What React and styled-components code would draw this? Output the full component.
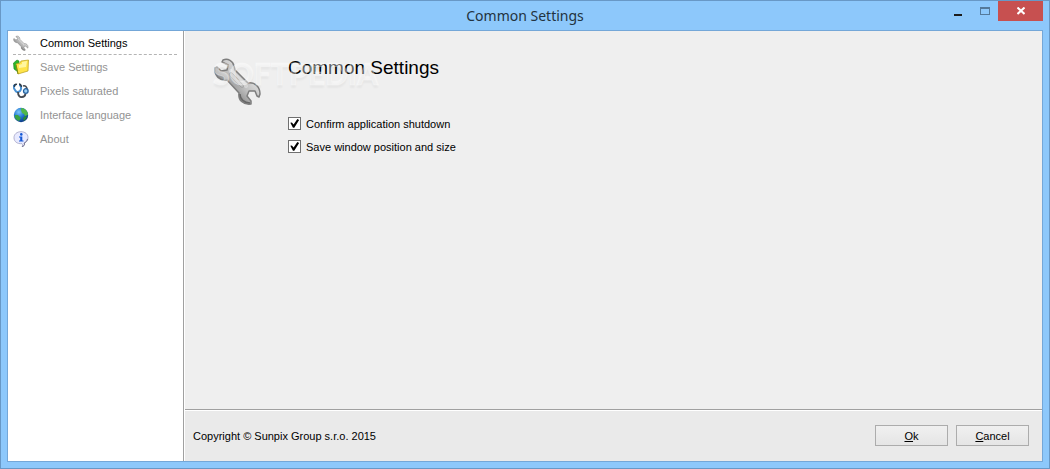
import React, { useState } from 'react';
import styled, { createGlobalStyle } from 'styled-components';

const GlobalStyle = createGlobalStyle`
  * {
    box-sizing: border-box;
  }

  body {
    margin: 0;
    color: #000;
    font-family: 'Liberation Sans', Arial, sans-serif;
    font-size: 11px;
    line-height: 16px;
  }
`;

const Window = styled.div`
  display: flex;
  flex-direction: column;
  min-height: 100vh;
  padding: 0 6px 6px;
  border: 1px solid #6898c6;
  background: #8dc8fb;
`;

const TitleBar = styled.header`
  display: grid;
  grid-template-columns: 1fr auto 1fr;
  height: 29px;
`;

const WindowTitle = styled.div`
  grid-column: 2;
  color: #233340;
  font-family: 'Noto Sans', 'Open Sans', sans-serif;
  font-size: 14px;
  line-height: 29px;
`;

const WindowButtons = styled.div`
  display: flex;
  justify-content: flex-end;
`;

const WindowButton = styled.button`
  width: ${(props) => (props.$close ? 45 : 27)}px;
  height: 20px;
  padding: 0;
  border: 0;
  background: ${(props) => (props.$close ? '#c75050' : 'transparent')};

  svg {
    display: block;
    margin: auto;
  }
`;

const Client = styled.div`
  display: flex;
  flex: 1;
  border: 1px solid #74a7d8;
  background: #fff;
`;

const Sidebar = styled.nav`
  width: 176px;
  flex-shrink: 0;
  border-right: 1px solid #a0a0a0;
`;

const NavItem = styled.a`
  display: flex;
  align-items: center;
  gap: 11px;
  height: 24px;
  margin-right: 6px;
  margin-left: 5px;
  border-bottom: 1px dashed ${(props) => (props.$active ? '#b4b4b4' : 'transparent')};
  color: ${(props) => (props.$active ? '#000' : '#939393')};
  text-decoration: none;

  svg {
    width: 16px;
    height: 16px;
  }
`;

const Content = styled.div`
  display: flex;
  flex: 1;
  flex-direction: column;
  margin-left: 1px;
`;

const Page = styled.main`
  position: relative;
  display: flex;
  flex: 1;
  gap: 25px;
  padding: 25px 28px;
  background: #efefef;

  > svg {
    width: 50px;
    height: 50px;
    flex-shrink: 0;
  }
`;

const Watermark = styled.div`
  position: absolute;
  top: 22px;
  left: 28px;
  color: rgba(255, 255, 255, 0.4);
  font-family: Lato, sans-serif;
  font-size: 30px;
  font-weight: 900;
  line-height: 40px;
  text-shadow: 0 3px 2px rgba(0, 0, 0, 0.04);
  -webkit-text-stroke: 1px rgba(255, 255, 255, 0.3);
  pointer-events: none;
`;

const Heading = styled.h1`
  margin: 0 0 32px;
  font-size: 19px;
  font-weight: normal;
  line-height: 24px;
`;

const Option = styled.label`
  display: flex;
  align-items: center;
  gap: 5px;
  height: 23px;
`;

const Checkbox = styled.input`
  display: block;
  width: 13px;
  height: 13px;
  margin: 0;
  border: 1px solid #707070;
  background: #fff;
  appearance: none;

  &:checked::before {
    display: block;
    width: 11px;
    height: 11px;
    background: #000;
    clip-path: polygon(12% 44%, 26% 40%, 42% 60%, 76% 10%, 92% 18%, 48% 88%, 36% 88%);
    content: '';
  }
`;

const Footer = styled.footer`
  display: flex;
  align-items: center;
  height: 52px;
  padding: 0 13px 0 8px;
  border-top: 1px solid #a0a0a0;
  background: #eaeaea;
  box-shadow: inset 0 1px #fff;
`;

const Copyright = styled.div`
  flex: 1;
`;

const Buttons = styled.div`
  display: flex;
  gap: 8px;
`;

const Button = styled.button`
  width: 73px;
  height: 21px;
  padding: 0;
  border: 1px solid #acacac;
  background: linear-gradient(#f0f0f0, #e5e5e5);
  color: #000;
  font: inherit;
`;

function WrenchIcon() {
  return (
    <svg viewBox='0 0 50 50'>
      <defs>
        <linearGradient id='steel' x1='0' y1='1' x2='1' y2='0'>
          <stop offset='0.3' stopColor='#8c8c8c' />
          <stop offset='0.5' stopColor='#bebebe' />
          <stop offset='0.7' stopColor='#dedede' />
        </linearGradient>
      </defs>
      <path
        d='M10 4 C15 2 20 5 21 10 L22 14 L35 27 C42 26 47 31 47 38 L46 41 L44 40 L42 35 L36 35 L34 40 L38 45 L38 48 C30 49 25 44 26 37 L14 24 C7 25 1 20 2 12 L4 11 L8 15 L14 14 L15 9 L9 6 Z'
        fill='url(#steel)'
        stroke='#7e7e7e'
        strokeWidth='1.5'
        strokeLinejoin='round'
      />
      <path d='M18 15 L33 30' stroke='#eee' strokeWidth='4' opacity='0.5' strokeLinecap='round' />
      <path
        d='M17 17 C16 19 17 20 18 21 L28 31 C30 32 31 31 30 29 L20 18 C19 17 18 16 17 17 Z'
        fill='#c8c8c8'
        stroke='#a4a4a4'
      />
      <path d='M27 38 C27 43 31 47 37 47' fill='none' stroke='#666' strokeWidth='1.5' />
    </svg>
  );
}

function FoldersIcon() {
  return (
    <svg viewBox='0 0 16 16'>
      <path d='M0.5 4 L4 1 L6 2 L5 13 L1 10 Z' fill='#2bb52b' stroke='#168416' strokeWidth='0.6' />
      <path d='M3 5 L7 4 L8 2 L15.5 1 L15 12 L5 15 Z' fill='#ffe44a' stroke='#b89c18' strokeWidth='0.7' />
      <path d='M9 3 L14 2 L13 8 L6 9 L6 6 L9 5 Z' fill='#fff6a0' />
      <path d='M3 6 L5 15' stroke='#7d8c10' strokeWidth='1' />
    </svg>
  );
}

function StethoscopeIcon() {
  return (
    <svg viewBox='0 0 16 16' fill='none'>
      <path d='M3 2 C0 2 0 4 2 7 C3 9 5 10 7 8 C9 6 8 2 6 2' stroke='#4a92d4' strokeWidth='2' />
      <path d='M1.5 4 C1 2 2 1 4 1.5 M6 1 C8 1 8 2 8.5 4' stroke='#2d3a48' strokeWidth='1.5' />
      <path d='M5 9 C5 13 7 14.5 9 14 C11 14 12 13 12.5 11' stroke='#454b53' strokeWidth='1.9' />
      <path d='M10 3 C12 2 14 4 14 6' stroke='#454b53' strokeWidth='1.5' />
      <circle cx='12.8' cy='8' r='2.3' fill='#9bd0f5' stroke='#255f9c' strokeWidth='1.3' />
    </svg>
  );
}

function GlobeIcon() {
  return (
    <svg viewBox='0 0 16 16'>
      <defs>
        <radialGradient id='ocean' cx='0.35' cy='0.3' r='0.75'>
          <stop offset='0' stopColor='#7cc6fa' />
          <stop offset='0.5' stopColor='#2277d0' />
          <stop offset='1' stopColor='#0b3480' />
        </radialGradient>
      </defs>
      <circle cx='8' cy='8' r='7.2' fill='url(#ocean)' />
      <path d='M8 1 C12 1 15 4 15 8 L12 9 L11 7 L9 6 L8 3 Z' fill='#4fb848' />
      <path d='M2 8 L5 8 L8 11 L6 14 C3 13 1 10 2 8 Z' fill='#39a344' />
      <path d='M12 9 L14 10 C13 12 12 13 11 14 L10 11 Z' fill='#258b35' />
    </svg>
  );
}

function InfoIcon() {
  return (
    <svg viewBox='0 0 16 16'>
      <path
        d='M8 0.7 C12 0.7 15 3 15 6.5 C15 9 14 11 11.5 12 C12 14 11 15 9 15.5 C10 14 9.5 13 9 12.7 C4 13 1 10.5 1 6.8 C1 3 4 0.7 8 0.7 Z'
        fill='#e8eaff'
        stroke='#aaaacb'
        strokeWidth='0.9'
      />
      <path d='M14.5 8 C14 10 13 11 11.2 12 C12 14 11 15 9 15.5' fill='none' stroke='#70708c' />
      <circle cx='8.3' cy='3.4' r='1.3' fill='#1458d6' />
      <path d='M6 5.5 H9.3 V9.5 H10.5 V10.5 H6 V9.5 H7.2 V6.5 H6 Z' fill='#1458d6' />
    </svg>
  );
}

const sections = [
  { name: 'Common Settings', Icon: WrenchIcon },
  { name: 'Save Settings', Icon: FoldersIcon },
  { name: 'Pixels saturated', Icon: StethoscopeIcon },
  { name: 'Interface language', Icon: GlobeIcon },
  { name: 'About', Icon: InfoIcon },
];

function App() {
  const [confirmShutdown, setConfirmShutdown] = useState(true);
  const [saveWindow, setSaveWindow] = useState(true);

  return (
    <Window>
      <GlobalStyle />
      <TitleBar>
        <WindowTitle>Common Settings</WindowTitle>
        <WindowButtons>
          <WindowButton aria-label='Minimize'>
            <svg width='10' height='12'>
              <path d='M1 9 H9 V11 H1 Z' fill='#1c1c1c' />
            </svg>
          </WindowButton>
          <WindowButton aria-label='Maximize'>
            <svg width='10' height='8'>
              <path d='M0 0 H10 V8 H0 Z M1 2 V7 H9 V2 Z' fill='#54799a' fillRule='evenodd' />
            </svg>
          </WindowButton>
          <WindowButton $close aria-label='Close'>
            <svg width='8' height='8'>
              <path d='M0.5 0.5 L7.5 7 M7.5 0.5 L0.5 7' stroke='#fff' strokeWidth='2' />
            </svg>
          </WindowButton>
        </WindowButtons>
      </TitleBar>
      <Client>
        <Sidebar>
          {sections.map(({ name, Icon }, index) => (
            <NavItem href='#' key={name} $active={index === 0}>
              <Icon />
              {name}
            </NavItem>
          ))}
        </Sidebar>
        <Content>
          <Page>
            <WrenchIcon />
            <div>
              <Heading>Common Settings</Heading>
              <Option>
                <Checkbox
                  type='checkbox'
                  checked={confirmShutdown}
                  onChange={(e) => setConfirmShutdown(e.target.checked)}
                />
                Confirm application shutdown
              </Option>
              <Option>
                <Checkbox
                  type='checkbox'
                  checked={saveWindow}
                  onChange={(e) => setSaveWindow(e.target.checked)}
                />
                Save window position and size
              </Option>
            </div>
            <Watermark aria-hidden='true'>SOFTPEDIA</Watermark>
          </Page>
          <Footer>
            <Copyright>Copyright © Sunpix Group s.r.o. 2015</Copyright>
            <Buttons>
              <Button>
                <u>O</u>k
              </Button>
              <Button>
                <u>C</u>ancel
              </Button>
            </Buttons>
          </Footer>
        </Content>
      </Client>
    </Window>
  );
}

export default App;
